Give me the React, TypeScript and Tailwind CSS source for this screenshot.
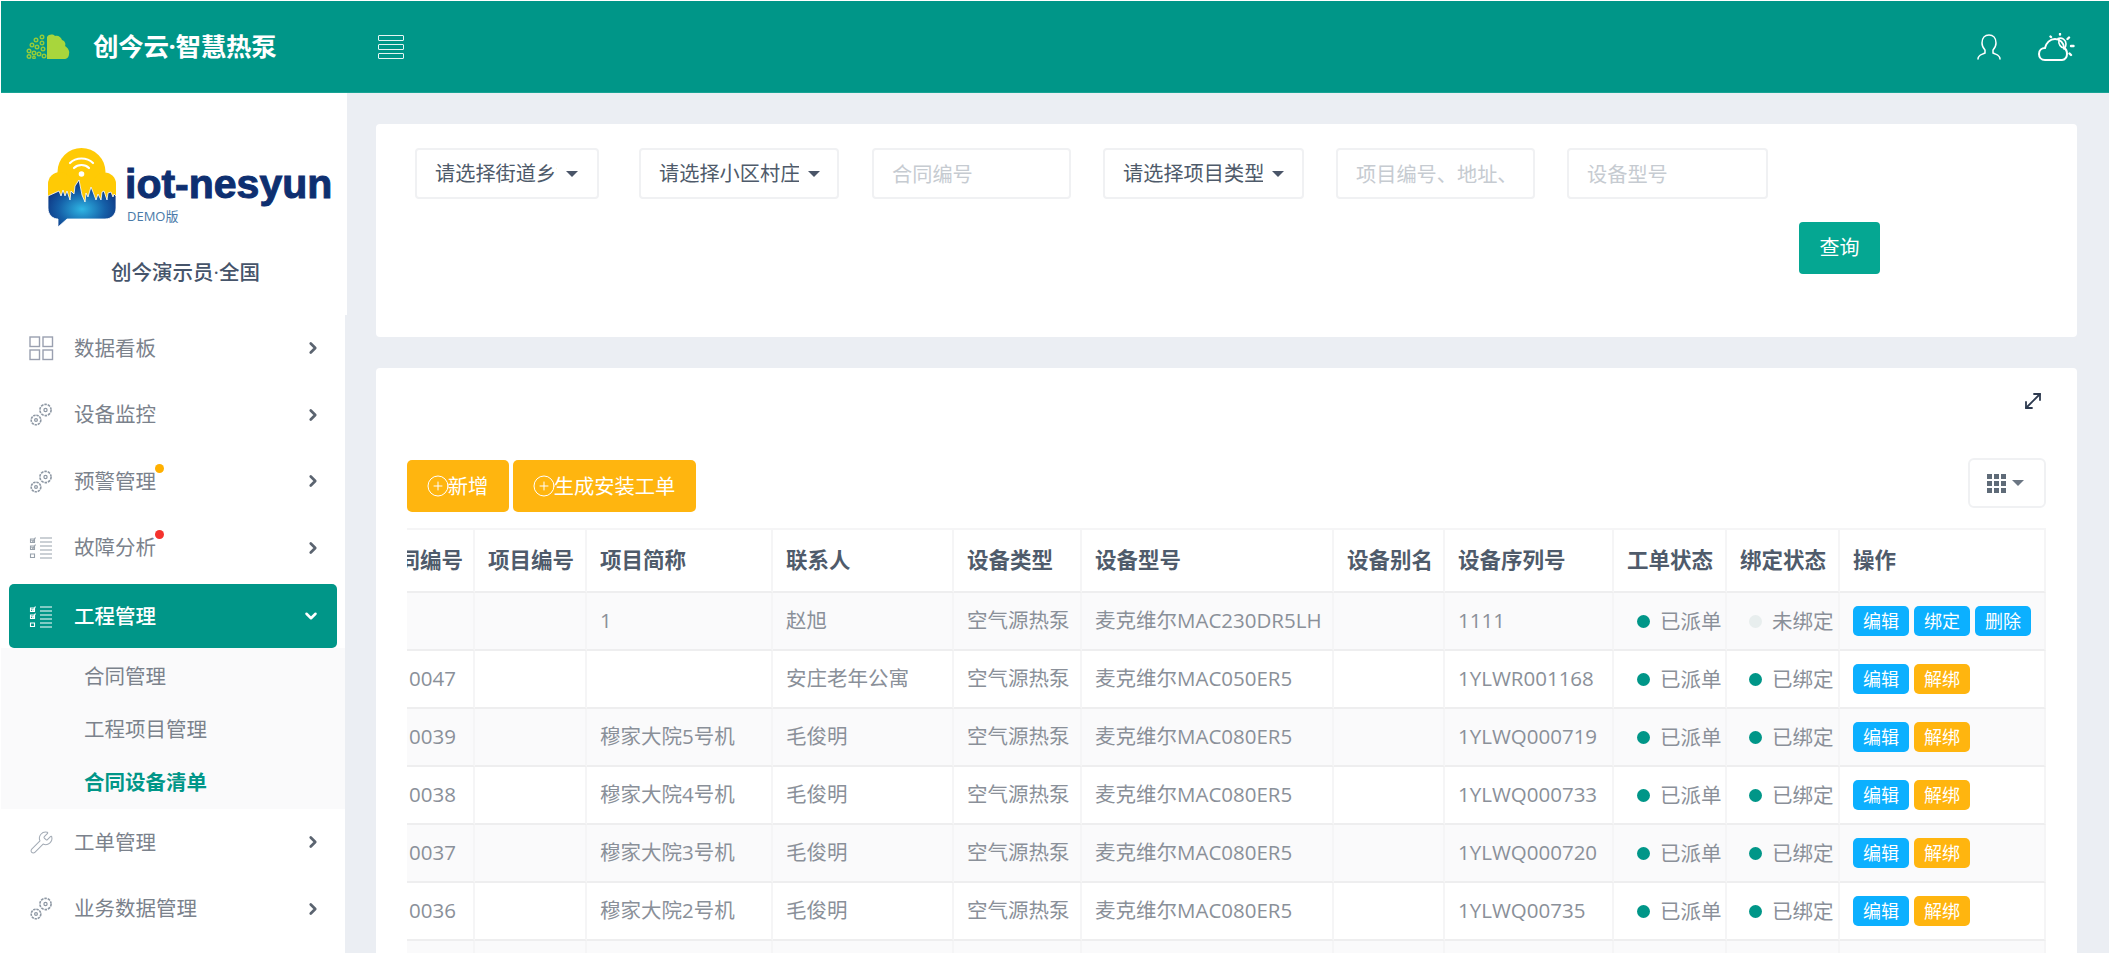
import React from "react";
import { ChevronDown, ChevronRight, CirclePlus, MoveDiagonal, Wrench } from "lucide-react";

const colWidths = [68, 112, 186, 181, 128, 252, 111, 169, 113, 113, 206];
const headers = ["合同编号", "项目编号", "项目简称", "联系人", "设备类型", "设备型号", "设备别名", "设备序列号", "工单状态", "绑定状态", "操作"];

interface RowData {
  no: string;
  name: string;
  contact: string;
  model: string;
  serial: string;
  bound: boolean;
}

const rows: RowData[] = [
  { no: "", name: "1", contact: "赵旭", model: "麦克维尔MAC230DR5LH", serial: "1111", bound: false },
  { no: "0047", name: "", contact: "安庄老年公寓", model: "麦克维尔MAC050ER5", serial: "1YLWR001168", bound: true },
  { no: "0039", name: "穆家大院5号机", contact: "毛俊明", model: "麦克维尔MAC080ER5", serial: "1YLWQ000719", bound: true },
  { no: "0038", name: "穆家大院4号机", contact: "毛俊明", model: "麦克维尔MAC080ER5", serial: "1YLWQ000733", bound: true },
  { no: "0037", name: "穆家大院3号机", contact: "毛俊明", model: "麦克维尔MAC080ER5", serial: "1YLWQ000720", bound: true },
  { no: "0036", name: "穆家大院2号机", contact: "毛俊明", model: "麦克维尔MAC080ER5", serial: "1YLWQ00735", bound: true },
];

/* 侧边栏图标 */
const GridIcon = () => (
  <svg width="25" height="25" viewBox="0 0 25 25" fill="none" stroke="#9aa0b0" strokeWidth="1.4">
    <rect x="1" y="1" width="9.5" height="9.5" />
    <rect x="14" y="1" width="9.5" height="9.5" />
    <rect x="1" y="14" width="9.5" height="9.5" />
    <rect x="14" y="14" width="9.5" height="9.5" />
  </svg>
);

const GearsIcon = () => (
  <svg width="25" height="25" viewBox="0 0 25 25" fill="none" stroke="#8d97a3" strokeWidth="1.2">
    <circle cx="16.5" cy="8" r="5.6" strokeDasharray="2.6 0.9" strokeWidth="1.6" />
    <circle cx="16.5" cy="8" r="1.6" />
    <circle cx="7" cy="18" r="4.8" strokeDasharray="2.4 0.8" strokeWidth="1.6" />
    <circle cx="7" cy="18" r="1.4" />
  </svg>
);

const ChecklistIcon = ({ color = "#98a1ab" }: { color?: string }) => (
  <svg width="25" height="25" viewBox="0 0 25 25" fill="none" stroke={color} strokeWidth="1.1">
    <path d="M1.500 4h4v3.500h-4z M1.500 11h4v3.500h-4z M1.500 19h4v3.500h-4z" />
    <path d="M2.500 5l1.500 1.500 2.500-4 M2.500 12l1.500 1.500 2.500-4" />
    <path d="M11 3h12 M11 7h12 M11 11h12 M11 15h12 M11 19h12 M11 23h12" />
  </svg>
);

const MenuRow = ({ icon, label, dot }: { icon: React.ReactNode; label: string; dot?: string }) => (
  <div className="h-[66.5px] flex items-center pl-[28px] text-[20.500px] text-[#7b828c]">
    <span className="w-[45px] flex shrink-0">{icon}</span>
    <span className="relative">
      {label}
      {dot && <i className={`absolute -right-[8px] -top-[2px] w-[9px] h-[9px] rounded-full ${dot}`} />}
    </span>
    <ChevronRight className="ml-auto mr-[23px] text-[#5b6470]" size={18} strokeWidth={3.6} />
  </div>
);

const HeaderLogo = () => (
  <svg width="44" height="25" viewBox="0 0 44 25" className="shrink-0">
    <path d="M21 3c2-3 6-3 8-1 3-1 6 1 7 4 3 1 4 4 3 6 3 2 5 5 4 8 0 3-2 5-5 5H21z" fill="#a8d63c" />
    <g fill="none" stroke="#93cb3a" strokeWidth="1.4">
      <circle cx="16" cy="3" r="1.800" />
      <circle cx="10" cy="6" r="1.800" />
      <circle cx="16" cy="9" r="1.800" />
      <circle cx="6" cy="11" r="1.800" />
      <circle cx="11" cy="13" r="1.800" />
      <circle cx="17" cy="15" r="1.800" />
      <circle cx="3" cy="17" r="1.800" />
      <circle cx="8" cy="19" r="1.800" />
      <circle cx="13" cy="20" r="1.800" />
      <circle cx="18" cy="22" r="1.800" />
      <circle cx="3" cy="22.500" r="1.800" />
      <circle cx="8" cy="23.500" r="1.200" />
    </g>
  </svg>
);

const BrandLogo = () => (
  <svg width="69" height="80" viewBox="0 0 69 80" className="shrink-0">
    <defs>
      <radialGradient id="blueGlow" cx="50%" cy="62%" r="62%">
        <stop offset="0%" stopColor="#2fb6e4" />
        <stop offset="55%" stopColor="#1560a8" />
        <stop offset="100%" stopColor="#0d2c7a" />
      </radialGradient>
    </defs>
    <circle cx="33.500" cy="24" r="24" fill="#ffca05" />
    <circle cx="12" cy="36" r="12" fill="#ffca05" />
    <circle cx="56.500" cy="36" r="11.500" fill="#ffca05" />
    <rect x="0" y="36" width="68" height="24" fill="#ffca05" />
    <path
      d="M0 48v12c0 7 5 11 10 11v8l9-8h38c7 0 11-5 11-11V48l-2-2-1 3-2-5-3 1-1 7-3-9-2 1-1 8-3-6-2 6-3-8-2-5-3 10-2-4-1 9-3-7-3-15-4 6-1 8-3-3-1 9-3-9-2 5-2-6-2 6-2-5z"
      fill="url(#blueGlow)"
      stroke="#fff"
      strokeWidth="0.8"
    />
    <g fill="none" stroke="#fff" strokeWidth="2.2" strokeLinecap="round">
      <path d="M22 15c6-6 17-6 23 0" />
      <path d="M26 20c4-4 11-4 15 0" />
    </g>
    <circle cx="33.500" cy="26" r="2.800" fill="#fff" />
  </svg>
);

const Caret = ({ className = "" }: { className?: string }) => (
  <i className={`block w-0 h-0 border-x-[6px] border-x-transparent border-t-[6px] border-t-[#4a5568] ${className}`} />
);

const SelectBox = ({ label, className, textClass }: { label: string; className: string; textClass: string }) => (
  <div className={`h-[51px] flex items-center pl-[18px] bg-white border-2 border-[#f0f1f3] rounded-[4px] text-[20.200px] text-[#4e5a6a] shrink-0 ${className}`}>
    <span className={`overflow-hidden whitespace-nowrap ${textClass}`}>{label}</span>
    <Caret className="ml-[9px]" />
  </div>
);

const SearchInput = ({ placeholder, className }: { placeholder: string; className: string }) => (
  <input
    placeholder={placeholder}
    className={`h-[51px] px-[18px] bg-white border-2 border-[#f0f1f3] rounded-[4px] text-[20.200px] placeholder:text-[#c6cbd1] outline-none shrink-0 ${className}`}
  />
);

const Tag = ({ label, tone }: { label: string; tone: "blue" | "orange" }) => (
  <span
    className={`w-[56px] h-[30px] flex items-center justify-center rounded-[5px] text-[18px] text-white ${
      tone === "blue" ? "bg-[#0cb0ff]" : "bg-[#ffb50f]"
    }`}
  >
    {label}
  </span>
);

const Status = ({ label, on }: { label: string; on: boolean }) => (
  <div className="flex items-center gap-[10px] whitespace-nowrap">
    <i className={`w-[13px] h-[13px] rounded-full shrink-0 ${on ? "bg-[#009688]" : "bg-[#e8eeee]"}`} />
    {label}
  </div>
);

const cellClass = "border-r-2 border-r-[#f5f5f6] border-b-2 border-b-[#eeeeef] px-[13px] whitespace-nowrap";
const textCell = `${cellClass} pb-[2px]`;

export default function App() {
  return (
    <div className="h-screen flex flex-col overflow-hidden bg-white pl-px pt-px pr-[2px] font-['Open_Sans','Noto_Sans_CJK_SC',sans-serif]">
      {/* 顶栏 */}
      <header className="h-[92px] shrink-0 flex items-center bg-[#009688] border-b border-b-[#18a394] pl-[25px] pr-[34px] text-white">
        <HeaderLogo />
        <span className="ml-[23px] text-[25.500px] font-bold tracking-[-0.3px] w-[285px]">创今云·智慧热泵</span>
        <div className="flex flex-col gap-[3px]">
          <i className="block w-[26px] h-[6px] border border-white/90 rounded-[1px]" />
          <i className="block w-[26px] h-[6px] border border-white/90 rounded-[1px]" />
          <i className="block w-[26px] h-[6px] border border-white/90 rounded-[1px]" />
        </div>
        <svg className="ml-auto" width="26" height="26" viewBox="0 0 26 26" fill="none" stroke="#fff" strokeWidth="1.5" strokeLinecap="round">
          <path d="M2 25c0-4 3-4 7-6v-3c-2-2-3-4-3-7 0-5 3-8 7-8s7 3 7 8c0 3-1 5-3 7v3c4 2 7 2 7 6" />
        </svg>
        <svg className="ml-[36px]" width="37" height="28" viewBox="0 0 37 28" fill="none" stroke="#fff" strokeWidth="2" strokeLinecap="round">
          <path d="M7 27C3 27 1 24 1 21 1 17 4 15 7 15 8 10 12 6 17 6 22 6 26 10 26 15 28 16 29 18 29 21 29 24 27 27 24 27z" />
          <path d="M20 5.500C24 4 28 7 28 11 28 13 27 15 26 16 M21 7C20 11 23 15 26 15" strokeWidth="1.600" />
          <path d="M22 1v0.500 M31 4.500l-1.500 1.500 M35.500 13h-2.500 M33 22l-1.500-1.500 M12.500 3.500l0.500 0.500" strokeWidth="2.400" />
        </svg>
      </header>

      <div className="flex-1 flex min-h-0 bg-[#ebeef3]">
        {/* 侧边栏 */}
        <aside className="w-[346px] shrink-0 flex flex-col">
          <div className="h-[222px] bg-white flex flex-col">
            <div className="flex pl-[47px] pt-[55px]">
              <BrandLogo />
              <div className="ml-[8px] mt-[11px]">
                <div className="font-['Liberation_Sans'] font-bold text-[41px] leading-[50px] text-[#0e2f70] [-webkit-text-stroke:1px_#0e2f70]">iot-nesyun</div>
                <div className="text-[13px] leading-[14px] ml-[2px] text-[#4a7aa8]">DEMO版</div>
              </div>
            </div>
            <div className="mt-[29px] pl-[110px] text-[20.500px] font-medium text-[#46546a]">创今演示员·全国</div>
          </div>
          <nav className="flex-1 bg-white mr-[2px]">
            <MenuRow icon={<GridIcon />} label="数据看板" />
            <MenuRow icon={<GearsIcon />} label="设备监控" />
            <MenuRow icon={<GearsIcon />} label="预警管理" dot="bg-[#ffb000]" />
            <MenuRow icon={<ChecklistIcon />} label="故障分析" dot="bg-[#f5322d]" />
            <div className="mt-[3px] mx-[8px] h-[64px] flex items-center pl-[20px] bg-[#009688] rounded-[5px] text-[20.500px] font-medium text-white">
              <span className="w-[45px] flex shrink-0"><ChecklistIcon color="#ffffff" /></span>
              工程管理
              <ChevronDown className="ml-auto mr-[17px]" size={18} strokeWidth={3.4} />
            </div>
            <div className="bg-[#fafafb] text-[20.500px] text-[#7b828c] pl-[83px] pt-[2px]">
              <div className="h-[53px] flex items-center">合同管理</div>
              <div className="h-[53px] flex items-center">工程项目管理</div>
              <div className="h-[53px] flex items-center font-bold text-[#009688]">合同设备清单</div>
            </div>
            <MenuRow icon={<Wrench size={25} strokeWidth={1} color="#a3abb5" />} label="工单管理" />
            <MenuRow icon={<GearsIcon />} label="业务数据管理" />
          </nav>
        </aside>

        {/* 内容 */}
        <main className="flex-1 min-w-0 pl-[29px] pr-[32px] pt-[31px] flex flex-col">
          <section className="h-[213px] shrink-0 bg-white rounded-[4px] pt-[24px]">
            <div className="flex pl-[39px]">
              <SelectBox label="请选择街道乡镇" className="w-[184px]" textClass="w-[122px]" />
              <SelectBox label="请选择小区村庄" className="w-[200px] ml-[40px]" textClass="w-[140px]" />
              <SearchInput placeholder="合同编号" className="w-[199px] ml-[33px]" />
              <SelectBox label="请选择项目类型" className="w-[201px] ml-[32px]" textClass="w-[140px]" />
              <SearchInput placeholder="项目编号、地址、联系人" className="w-[199px] ml-[32px]" />
              <SearchInput placeholder="设备型号" className="w-[201px] ml-[32px]" />
            </div>
            <div className="flex justify-end pr-[197px] mt-[23px]">
              <button className="w-[81px] h-[52px] bg-[#05a792] rounded-[4px] text-white text-[20px]">查询</button>
            </div>
          </section>

          <section className="flex-1 min-h-0 mt-[31px] bg-white rounded-t-[4px] px-[31px] overflow-hidden">
            <div className="h-[92px] flex justify-end pt-[21px]">
              <MoveDiagonal className="mr-[1px] text-[#2d3a4f]" size={24} strokeWidth={1.8} />
            </div>
            <div className="flex items-start justify-between">
              <div className="flex gap-[4px]">
                <button className="w-[102px] h-[52px] flex items-center justify-center bg-[#ffb50f] rounded-[5px] text-white text-[20.300px]">
                  <CirclePlus size={24} strokeWidth={1} className="-mx-[2px]" />
                  新增
                </button>
                <button className="w-[183px] h-[52px] flex items-center justify-center bg-[#ffb50f] rounded-[5px] text-white text-[20.300px]">
                  <CirclePlus size={24} strokeWidth={1} className="-mx-[2px]" />
                  生成安装工单
                </button>
              </div>
              <div className="w-[78px] h-[50px] -mt-[2px] flex items-center pl-[17px] gap-[6px] border-2 border-[#f0f1f3] rounded-[6px]">
                <div className="grid grid-cols-3 gap-[2px]">
                  {Array.from({ length: 9 }).map((_, i) => (
                    <i key={i} className="block w-[5px] h-[5px] bg-[#5f6b78]" />
                  ))}
                </div>
                <Caret className="border-t-[#6b7683]" />
              </div>
            </div>

            {/* 表格 */}
            <div className="mt-[16px] overflow-hidden border-t-2 border-t-[#f5f5f6]">
              <table className="table-fixed border-separate border-spacing-0 w-[1639px] text-[20.500px] text-[#8a9099]">
                <colgroup>
                  {colWidths.map((w, i) => (
                    <col key={i} style={{ width: w }} />
                  ))}
                </colgroup>
                <thead>
                  <tr className="h-[63px]">
                    {headers.map((h, i) => (
                      <th
                        key={h}
                        className={`${cellClass} text-left text-[21.500px] font-bold text-[#4f5b6b] ${i === 0 ? "overflow-hidden pl-0" : ""} ${i === 10 ? "border-r-[#f0f0f1]" : ""}`}
                      >
                        <span className={i === 0 ? "-ml-[30px] block" : ""}>{h}</span>
                      </th>
                    ))}
                  </tr>
                </thead>
                <tbody>
                  {rows.map((r, i) => (
                    <tr key={i} className={`h-[58px] ${i % 2 === 0 ? "bg-[#fafafb]" : "bg-white"}`}>
                      <td className={`${textCell} !pl-[2px]`}>{r.no}</td>
                      <td className={cellClass}></td>
                      <td className={textCell}>{r.name}</td>
                      <td className={textCell}>{r.contact}</td>
                      <td className={textCell}>空气源热泵</td>
                      <td className={textCell}>{r.model}</td>
                      <td className={cellClass}></td>
                      <td className={textCell}>{r.serial}</td>
                      <td className={`${cellClass} !pl-[23px] !pr-0`}>
                        <Status label="已派单" on />
                      </td>
                      <td className={`${cellClass} !pl-[22px] !pr-0`}>
                        <Status label={r.bound ? "已绑定" : "未绑定"} on={r.bound} />
                      </td>
                      <td className={cellClass}>
                        <div className="flex gap-[5px]">
                          <Tag label="编辑" tone="blue" />
                          {r.bound ? (
                            <Tag label="解绑" tone="orange" />
                          ) : (
                            <>
                              <Tag label="绑定" tone="blue" />
                              <Tag label="删除" tone="blue" />
                            </>
                          )}
                        </div>
                      </td>
                    </tr>
                  ))}
                  <tr className="h-[58px] bg-[#fafafb]">
                    {colWidths.map((_, i) => (
                      <td key={i} className={cellClass}></td>
                    ))}
                  </tr>
                </tbody>
              </table>
            </div>
          </section>
        </main>
      </div>
    </div>
  );
}
